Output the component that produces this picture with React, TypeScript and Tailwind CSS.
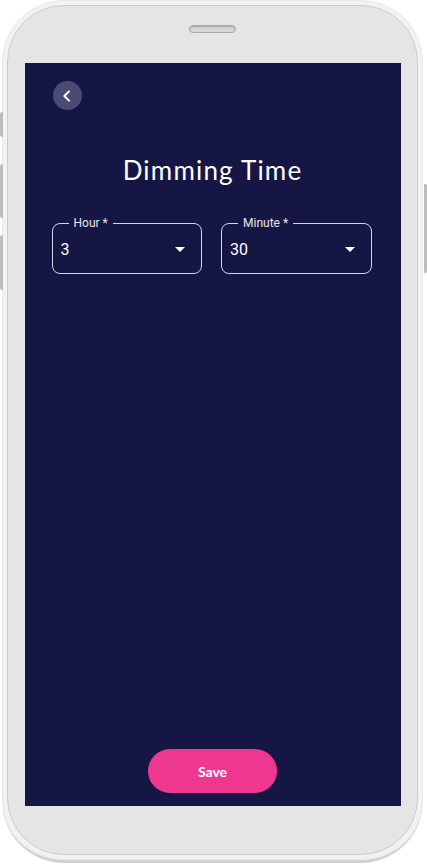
import React from "react";

function Field({ label, value }: { label: string; value: string }) {
  return (
    <div className="relative h-[51px] flex-1 rounded-[8px] border border-[#d6d6e0] flex items-center pl-[8px] pr-[9px]">
      <span className="absolute left-[16px] top-[-8px] bg-[#161645] px-[5px] text-[12px] leading-[14px] text-[#e6e6ee] [font-family:Roboto,sans-serif]">
        {label}
      </span>
      <span className="flex-1 text-[16px] text-white [font-family:Roboto,sans-serif] pt-[2px]">{value}</span>
      <svg width="24" height="24" viewBox="0 0 24 24" className="text-white">
        <path d="M7 10l5 5 5-5z" fill="currentColor" />
      </svg>
    </div>
  );
}

export default function App() {
  return (
    <div className="relative w-[427px] h-[865px] bg-white overflow-hidden">
      {/* side buttons */}
      <div className="absolute left-0 top-[112px] h-[25px] w-[3px] rounded-l-[2px] bg-[#bdbdbd]" />
      <div className="absolute left-0 top-[164px] h-[54px] w-[3px] rounded-l-[2px] bg-[#bdbdbd]" />
      <div className="absolute left-0 top-[235px] h-[55px] w-[3px] rounded-l-[2px] bg-[#bdbdbd]" />
      <div className="absolute right-0 top-[184px] h-[89px] w-[3px] rounded-r-[2px] bg-[#bdbdbd]" />

      <div className="ml-[2px] mt-0 w-[421px] h-[863px] rounded-[62px] bg-[#f2f2f2] border-b-[3px] border-[#d2d2d2] p-[5px] shadow-[inset_0_0_3px_rgba(0,0,0,0.08)]">
        <div className="h-full rounded-[57px] bg-[#e5e5e5] border border-[#cdcdcd] flex flex-col items-center">
          <div className="h-[57px] w-full flex justify-center items-start pt-[19px]">
            <div className="w-[47px] h-[8px] rounded-full bg-[#d9d9d9] border border-[#a9a9a9] shadow-[inset_0_1px_2px_rgba(0,0,0,0.25)]" />
          </div>
          <div className="w-[376px] h-[743px] bg-[#161645] flex flex-col">
            <div className="pl-[28px] pt-[18px]">
              <div className="w-[29px] h-[29px] rounded-full bg-[#4a4a73] flex items-center justify-center">
                <svg width="16" height="16" viewBox="0 0 24 24" fill="none" stroke="white" strokeWidth="3" strokeLinecap="round" strokeLinejoin="round">
                  <path d="M15 5l-7 7 7 7" />
                </svg>
              </div>
            </div>
            <h1 className="mt-[43px] text-center text-white text-[26px] leading-[34px] tracking-[1.2px] [font-family:Lato,sans-serif]">
              Dimming Time
            </h1>
            <div className="mt-[36px] ml-[27px] mr-[29px] flex gap-[19px]">
              <Field label="Hour *" value="3" />
              <Field label="Minute *" value="30" />
            </div>
            <div className="flex-1" />
            <div className="flex justify-center pb-[13px]">
              <button className="w-[129px] h-[44px] rounded-full bg-[#ee3890] text-white text-[14px] font-bold [font-family:Lato,sans-serif]">
                Save
              </button>
            </div>
          </div>
        </div>
      </div>
    </div>
  );
}
